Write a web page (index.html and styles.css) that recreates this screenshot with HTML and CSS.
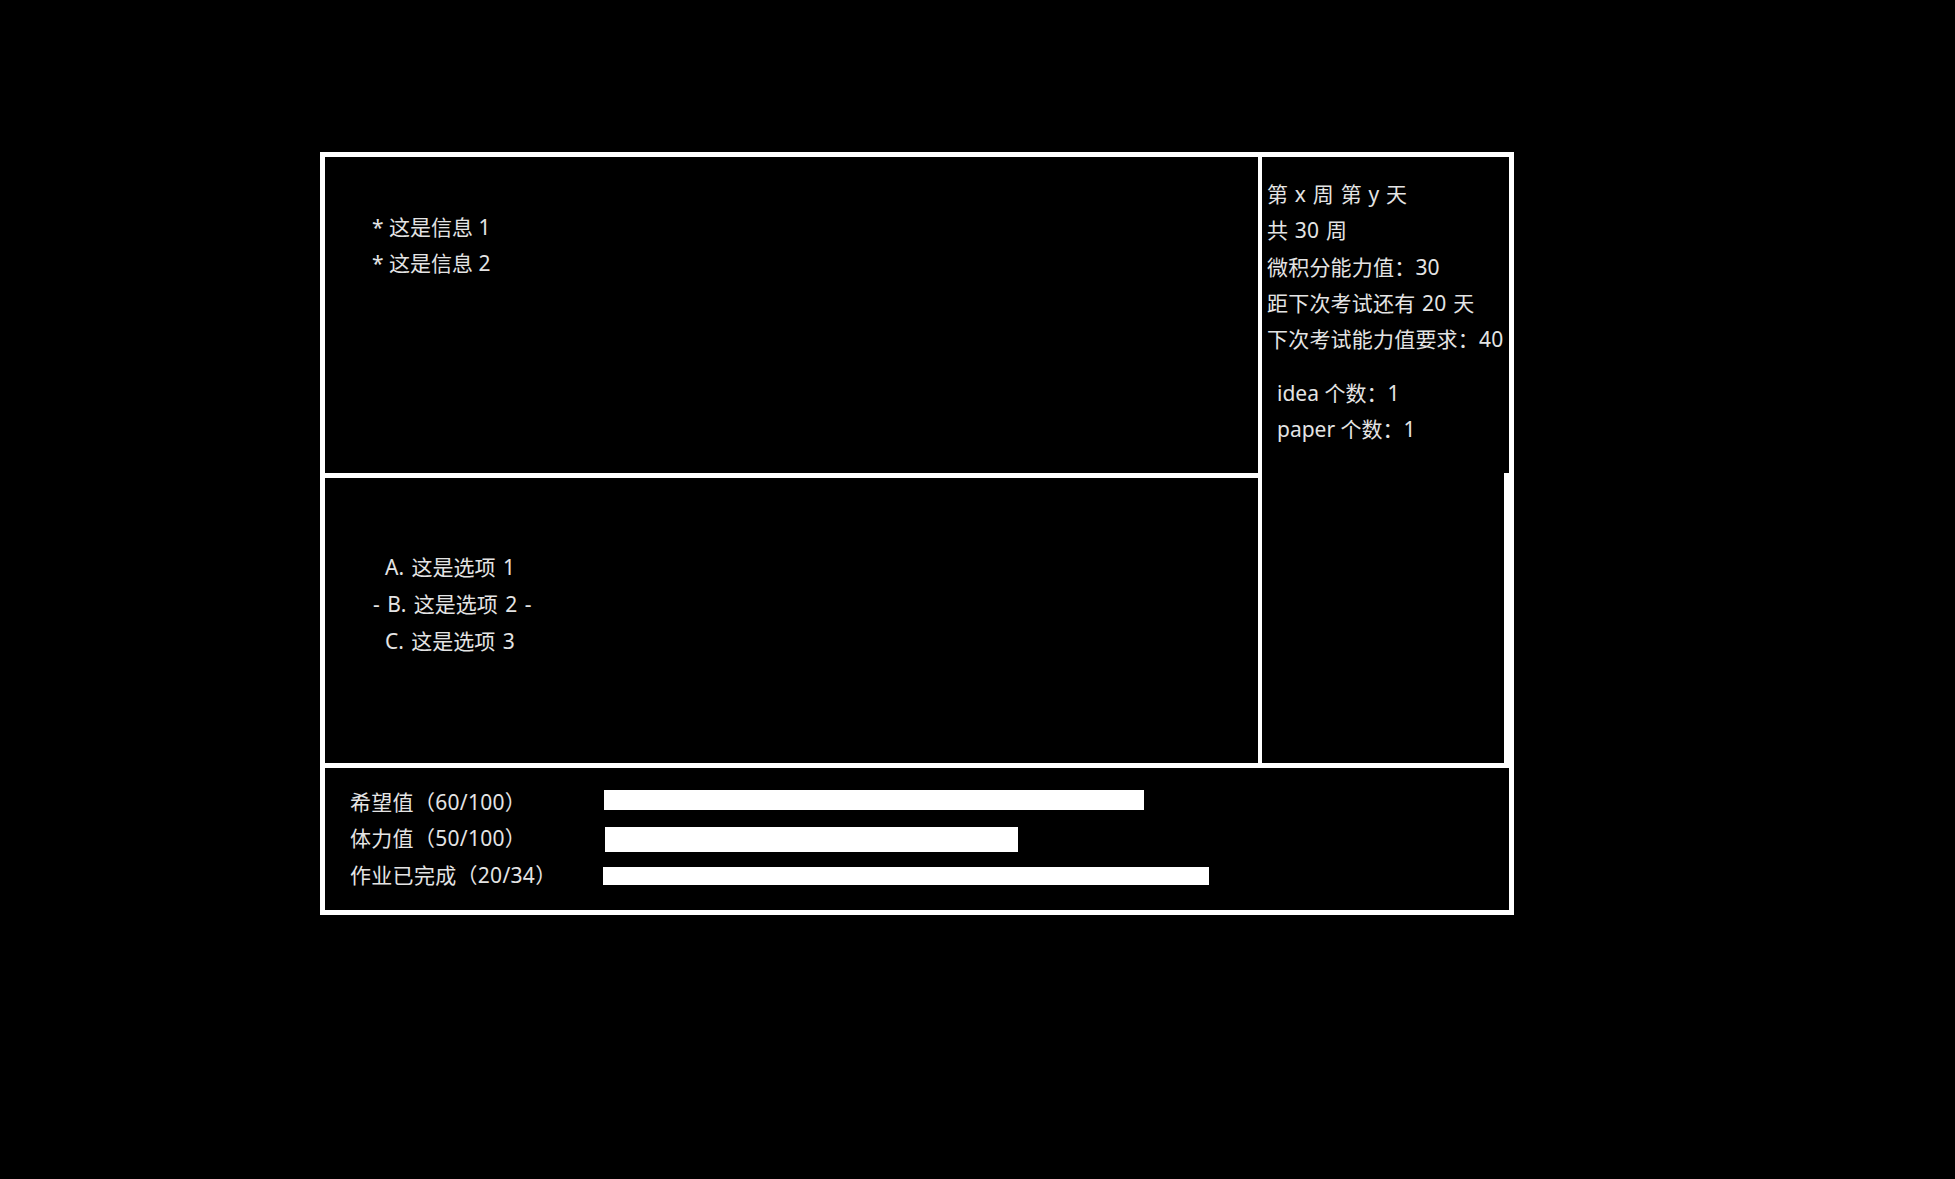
FILE: index.html
```html
<!DOCTYPE html>
<html lang="zh-CN">
<head>
<meta charset="utf-8">
<title>状态面板</title>
<link rel="stylesheet" href="styles.css">
</head>
<body>
<div class="frame">
  <div class="main">
    <div class="left">
      <div class="info">
        <div class="line">* 这是信息 1</div>
        <div class="line">* 这是信息 2</div>
      </div>
      <div class="options">
        <div class="opt">A. 这是选项 1</div>
        <div class="opt sel">- B. 这是选项 2 -</div>
        <div class="opt">C. 这是选项 3</div>
      </div>
    </div>
    <div class="right">
      <div class="right-upper">
        <div class="stats">
          <div class="line">第 x 周 第 y 天</div>
          <div class="line">共 30 周</div>
          <div class="line">微积分能力值：30</div>
          <div class="line">距下次考试还有 20 天</div>
          <div class="line">下次考试能力值要求：40</div>
        </div>
        <div class="counts">
          <div class="line">idea 个数：1</div>
          <div class="line">paper 个数：1</div>
        </div>
      </div>
      <div class="right-lower"></div>
    </div>
  </div>
  <div class="bottom">
    <div class="row row-hope">
      <div class="label">希望值（60/100）</div>
      <div class="bar" style="width:540px"></div>
    </div>
    <div class="row row-stamina">
      <div class="label">体力值（50/100）</div>
      <div class="bar" style="width:413px"></div>
    </div>
    <div class="row row-hw">
      <div class="label">作业已完成（20/34）</div>
      <div class="bar" style="width:606px"></div>
    </div>
  </div>
</div>
</body>
</html>
```

FILE: styles.css
```css
* {
  box-sizing: border-box;
}

body {
  margin: 0;
  background: #000;
  padding: 152px 0 0 320px;
  font-family: "Noto Sans", "Noto Sans CJK SC", sans-serif;
  font-size: 21px;
  color: #e4e4e4;
  width: 1955px;
  height: 1179px;
  overflow: hidden;
}

.frame {
  width: 1194px;
  height: 763px;
  border: 5px solid #fff;
  display: flex;
  flex-direction: column;
}

.main {
  display: flex;
  height: 611px;
  border-bottom: 5px solid #fff;
}

.left {
  width: 937px;
  border-right: 4px solid #fff;
  display: flex;
  flex-direction: column;
}

.info {
  height: 321px;
  border-bottom: 5px solid #fff;
  padding: 52px 0 0 47px;
}

.line {
  line-height: 36px;
  white-space: nowrap;
}

.options {
  flex: 1;
  padding: 71px 0 0 48px;
}

.opt {
  line-height: 37px;
  white-space: pre;
  padding-left: 12px;
  word-spacing: 2px;
}

.opt.sel {
  padding-left: 0;
}

.right {
  flex: 1;
  display: flex;
  flex-direction: column;
}

.right-upper {
  height: 316px;
  padding: 19px 0 0 5px;
}

.stats .line {
  line-height: 36.3px;
  word-spacing: 1px;
  letter-spacing: 0.2px;
}

.counts {
  margin-top: 18px;
  padding-left: 10px;
}

.counts .line {
  line-height: 36px;
}

.right-lower {
  flex: 1;
  border-right: 5px solid #fff;
}

.bottom {
  flex: 1;
  padding: 17px 0 0 25px;
}

.row {
  display: flex;
  align-items: center;
  height: 36px;
}

.row-hw {
  height: 38px;
}

.label {
  width: 254px;
  white-space: nowrap;
  line-height: 36px;
  letter-spacing: 0.3px;
  position: relative;
  top: -1px;
}

.bar {
  background: #fff;
}

.row-hope .bar {
  height: 20px;
  margin-bottom: 6px;
}

.row-stamina .label {
  width: 255px;
}

.row-stamina .bar {
  height: 25px;
}

.row-hw .label {
  width: 253px;
}

.row-hw .bar {
  height: 18px;
}
```
